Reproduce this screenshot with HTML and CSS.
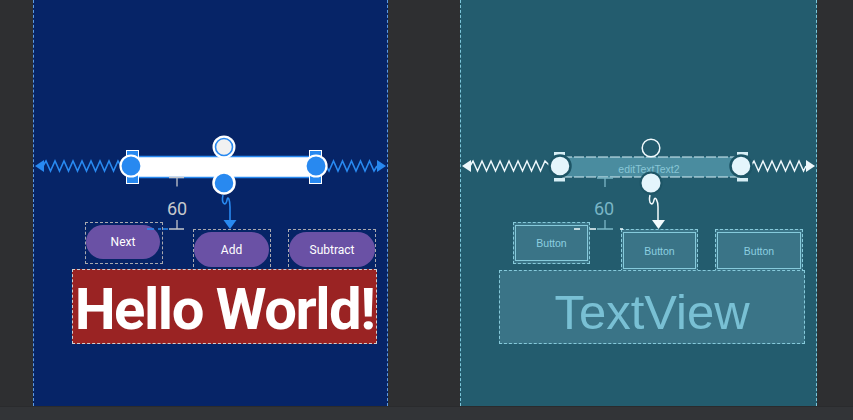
FILE: index.html
```html
<!DOCTYPE html>
<html>
<head>
<meta charset="utf-8">
<link rel="stylesheet" href="styles.css">
</head>
<body>
<div class="stage">
  <div class="panel design">
    <div class="box next"><span class="pill pill-next">Next</span></div>
    <div class="box add"><span class="pill pill-add">Add</span></div>
    <div class="box sub"><span class="pill pill-sub">Subtract</span></div>
    <div class="hello">Hello World!</div>
    <svg class="overlay" width="355" height="406" viewBox="0 0 355 406">
      <g fill="none" stroke="#2889f0" stroke-width="1.6" stroke-linejoin="miter">
        <polyline points="10,166 13,161 17.5,171 22,161 26.5,171 31,161 35.5,171 40,161 44.5,171 49,161 53.5,171 58,161 62.5,171 67,161 71.5,171 76,161 80.5,171 85,161 88,166"/>
        <polyline points="293,166 296,171 300.5,161 305,171 309.5,161 314,171 318.5,161 323,171 327.5,161 332,171 336.5,161 341,171 344,166"/>
      </g>
      <polygon points="2,166 11,160 11,172" fill="#2889f0"/>
      <polygon points="353,166 344,160 344,172" fill="#2889f0"/>
      <rect x="98" y="156.5" width="185" height="21" fill="#ffffff" stroke="#2889f0" stroke-width="1.5"/>
      <rect x="93.5" y="150.5" width="12" height="33" fill="#2889f0" stroke="#ffffff" stroke-width="1"/>
      <rect x="276.5" y="150.5" width="12" height="33" fill="#2889f0" stroke="#ffffff" stroke-width="1"/>
      <circle cx="98" cy="166" r="10.5" fill="#2889f0" stroke="#ffffff" stroke-width="2.2"/>
      <circle cx="283" cy="166" r="10.5" fill="#2889f0" stroke="#ffffff" stroke-width="2.2"/>
      <circle cx="191" cy="147" r="11.5" fill="#ffffff"/>
      <circle cx="191" cy="147" r="8.5" fill="#f1f1f1" stroke="#2889f0" stroke-width="1.6"/>
      <circle cx="191" cy="183" r="10.5" fill="#2889f0" stroke="#ffffff" stroke-width="2.5"/>
      <path d="M190,195 C188,204 193,207 194,200 C195,195 197,200 197,207 L197,221" fill="none" stroke="#2889f0" stroke-width="1.6"/>
      <polygon points="190.5,220 203.5,220 197,229" fill="#2889f0"/>
      <g stroke="#c3c6cc" stroke-width="1.3" fill="none">
        <path d="M136,177.5 H151 M144,177.5 V186.5"/>
        <path d="M144,220 V229 M136,229 H151"/>
      </g>
      <path d="M114,229 H121 M125,229 H128 M130,229 H135" stroke="#2889f0" stroke-width="1.3"/>
      <text x="144" y="215" class="dim dim-design" text-anchor="middle">60</text>
    </svg>
  </div>
  <div class="panel blueprint">
    <div class="bbtn b1">Button</div>
    <div class="bbtn b2">Button</div>
    <div class="bbtn b3">Button</div>
    <div class="tv">TextView</div>
    <svg class="overlay" width="357" height="406" viewBox="0 0 357 406">
      <g fill="none" stroke="#eef8fc" stroke-width="1.5">
        <polyline points="10,166 13,161 17.5,171 22,161 26.5,171 31,161 35.5,171 40,161 44.5,171 49,161 53.5,171 58,161 62.5,171 67,161 71.5,171 76,161 80.5,171 85,161 90,166"/>
        <polyline points="291,166 294,161 298.5,171 303,161 307.5,171 312,161 316.5,171 321,161 325.5,171 330,161 334.5,171 339,161 343.5,171 346,166"/>
      </g>
      <polygon points="2,166 11,160 11,172" fill="#eef8fc"/>
      <polygon points="355,166 346,160 346,172" fill="#eef8fc"/>
      <rect x="100" y="157" width="181" height="20" fill="#4a8c9f"/>
      <path d="M102,157 H281 M102,177 H281" stroke="#d6eef5" stroke-width="1.2" stroke-dasharray="10 2"/>
      <text x="189" y="172.5" class="etxt" text-anchor="middle">editTextText2</text>
      <rect x="94" y="152" width="11" height="3.5" fill="#d6eef5"/>
      <rect x="94" y="178" width="11" height="3.5" fill="#d6eef5"/>
      <rect x="277" y="152" width="11" height="3.5" fill="#d6eef5"/>
      <rect x="277" y="178" width="11" height="3.5" fill="#d6eef5"/>
      <circle cx="100" cy="166" r="10.5" fill="#e4f5fc" stroke="#1d5566" stroke-width="2.5"/>
      <circle cx="281" cy="166" r="10.5" fill="#e4f5fc" stroke="#1d5566" stroke-width="2.5"/>
      <circle cx="191" cy="148" r="8.8" fill="none" stroke="#f0fafd" stroke-width="1.5"/>
      <circle cx="191" cy="183" r="10.5" fill="#e4f5fc" stroke="#1d5566" stroke-width="2"/>
      <path d="M190,195 C188,204 193,207 194,200 C195,195 198,201 198,207 L198,221" fill="none" stroke="#f4fbfd" stroke-width="1.5"/>
      <polygon points="192,220 205,220 198.5,229" fill="#f4fbfd"/>
      <g stroke="#7ab6c6" stroke-width="1.3" fill="none">
        <path d="M137,178 H153 M145,178 V187"/>
        <path d="M145,220 V229 M137,229 H153"/>
      </g>
      <path d="M114,229 H120 M130,229 H136 M160,229 H163" stroke="#f0fafd" stroke-width="1.3"/>
      <text x="144" y="215" class="dim dim-bp" text-anchor="middle">60</text>
    </svg>
  </div>
</div>
<div class="statusbar"></div>
</body>
</html>
```
FILE: styles.css
```css
html, body {
  margin: 0;
  padding: 0;
}
body {
  background: #2e2f31;
  font-family: Roboto, "Liberation Sans", sans-serif;
  height: 420px;
  overflow: hidden;
}
.stage {
  display: flex;
  gap: 72px;
  padding-left: 33px;
  height: 406px;
}
.panel {
  position: relative;
  height: 406px;
  overflow: hidden;
  flex: none;
}
.panel::after {
  content: "";
  position: absolute;
  top: 0;
  bottom: 0;
  left: 0;
  right: 0;
  border-left: 1px dashed;
  border-right: 1px dashed;
  pointer-events: none;
}
.design {
  width: 355px;
  background: #062467;
}
.design::after {
  border-color: #5b9be2;
}
.blueprint {
  width: 357px;
  background: #235c6e;
}
.blueprint::after {
  border-color: #7cc6da;
}
.overlay {
  position: absolute;
  left: 0;
  top: 0;
}
.statusbar {
  height: 14px;
  background: #323437;
  border-top: 1px solid #2a2b2d;
}

/* design-mode widgets */
.box {
  position: absolute;
  box-sizing: border-box;
  border: 1px dashed #a9aab0;
  display: flex;
  align-items: flex-start;
  padding-top: 2px;
}
.pill {
  display: flex;
  align-items: center;
  justify-content: center;
  background: #6a51a5;
  color: #ffffff;
  font: 400 12px Roboto, "Liberation Sans", sans-serif;
  border-radius: 18px;
}
.next { left: 52px; top: 222px; width: 78px; height: 42px; }
.pill-next { width: 74px; height: 34px; }
.add { left: 160px; top: 229px; width: 78px; height: 43px; }
.pill-add { width: 75px; height: 35px; }
.sub { left: 255px; top: 229px; width: 88px; height: 43px; }
.pill-sub { width: 86px; height: 35px; }

.hello {
  position: absolute;
  left: 39px;
  top: 269px;
  width: 305px;
  height: 75px;
  box-sizing: border-box;
  border: 1px dashed #cfcfcf;
  background: #9a2323;
  color: #ffffff;
  font: 700 58px/68px Roboto, "Liberation Sans", sans-serif;
  letter-spacing: -1.5px;
  padding-top: 5px;
  text-align: center;
  white-space: nowrap;
  overflow: hidden;
}

.dim {
  font-family: Roboto, "Liberation Sans", sans-serif;
  font-size: 18px;
}
.dim-design { fill: #c6c8cc; }
.dim-bp { fill: #79b5c5; }
.etxt {
  font-family: "Liberation Sans", Arial, sans-serif;
  font-size: 10.5px;
  fill: #88c6d6;
}

/* blueprint widgets */
.bbtn {
  position: absolute;
  box-sizing: border-box;
  border: 1px dashed #86cadb;
  background: #3a7487;
  display: flex;
  align-items: center;
  justify-content: center;
  color: #8ccfe0;
  font: 10.5px "Liberation Sans", Arial, sans-serif;
}
.bbtn::before {
  content: "";
  position: absolute;
  inset: 2px 1px;
  border: 1px solid #86cadb;
}
.b1 { left: 53px; top: 222px; width: 77px; height: 42px; }
.b2 { left: 161px; top: 229px; width: 77px; height: 43px; }
.b3 { left: 255px; top: 229px; width: 88px; height: 43px; }
.tv {
  position: absolute;
  left: 39px;
  top: 270px;
  width: 306px;
  height: 74px;
  box-sizing: border-box;
  border: 1px dashed #86cadb;
  background: #3a7487;
  color: #79c0d4;
  font: 49px/56px "Liberation Sans", Arial, sans-serif;
  padding-top: 13px;
  text-align: center;
  white-space: nowrap;
}
```
